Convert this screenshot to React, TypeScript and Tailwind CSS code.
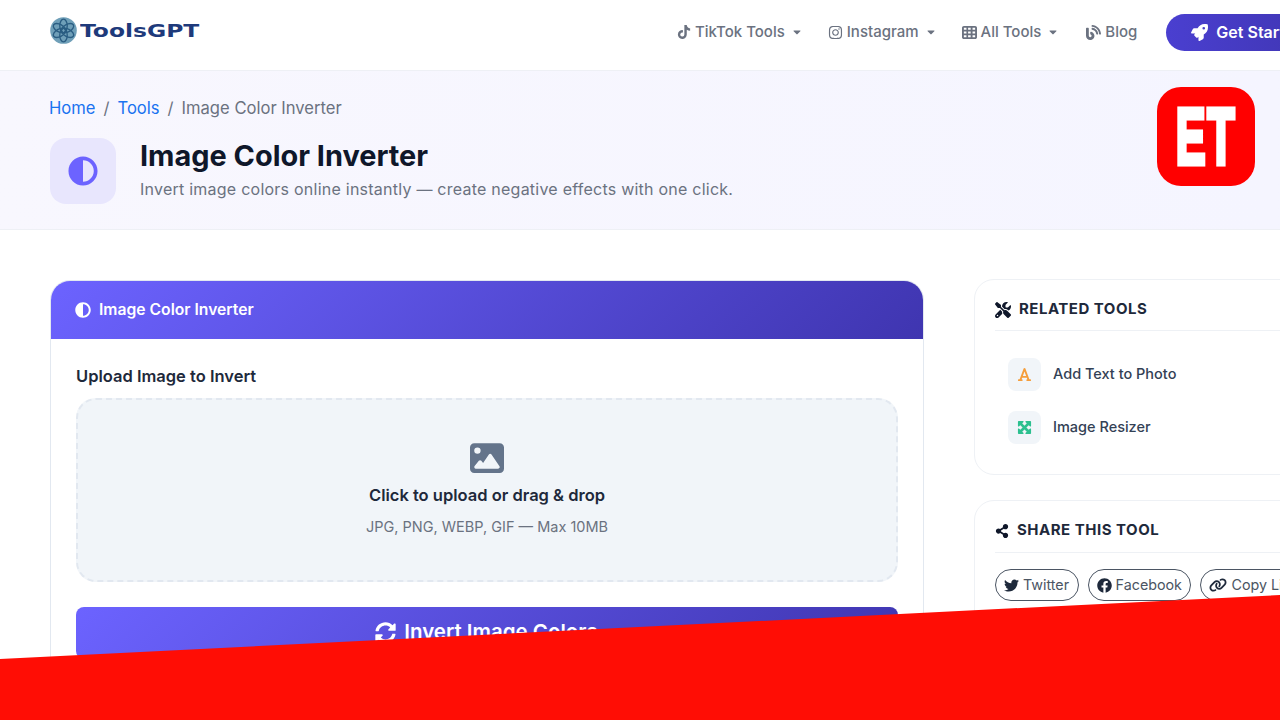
import { FaAdjust, FaBlog, FaCaretDown, FaFacebook, FaInstagram, FaRocket, FaShareAlt, FaSyncAlt, FaTiktok, FaTwitter } from 'react-icons/fa';
import { FaFont, FaImage, FaLink, FaMaximize, FaScrewdriverWrench, FaTableCells } from 'react-icons/fa6';

function LogoKnot() {
  return (
    <svg viewBox="0 0 26 26" className="h-[27px] w-[27px] shrink-0" aria-hidden>
      <circle cx="13" cy="13" r="12.8" fill="#6f9fb8" />
      <g fill="none" stroke="#2a5d82" strokeWidth="1.3">
        <ellipse cx="13" cy="8.5" rx="3.6" ry="6.5" />
        <ellipse cx="13" cy="8.5" rx="3.6" ry="6.5" transform="rotate(60 13 13)" />
        <ellipse cx="13" cy="8.5" rx="3.6" ry="6.5" transform="rotate(120 13 13)" />
        <ellipse cx="13" cy="8.5" rx="3.6" ry="6.5" transform="rotate(180 13 13)" />
        <ellipse cx="13" cy="8.5" rx="3.6" ry="6.5" transform="rotate(240 13 13)" />
        <ellipse cx="13" cy="8.5" rx="3.6" ry="6.5" transform="rotate(300 13 13)" />
      </g>
    </svg>
  );
}

function NavItem({ icon, label, caret }: { icon: React.ReactNode; label: string; caret?: boolean }) {
  return (
    <a className="flex items-center gap-1 text-[15px] font-medium text-[#6b7280]">
      {icon}
      <span>{label}</span>
      {caret && <FaCaretDown className="ml-[2px] h-[12px] w-[12px]" />}
    </a>
  );
}

function Navbar() {
  return (
    <nav className="flex h-[71px] items-center border-b border-[#eef0f5] bg-white pb-[6px] pl-[50px]">
      <a className="-mt-[4px] flex w-[627px] shrink-0 items-center">
        <LogoKnot />
        <span className="ml-[3px] origin-left scale-x-[1.3] text-[18px] font-bold text-[#1e3a7b] [font-family:'DejaVu_Sans',sans-serif]">
          ToolsGPT
        </span>
      </a>
      <div className="flex shrink-0 items-center">
        <div className="mr-[25px]">
          <NavItem icon={<FaTiktok className="h-[14px] w-[14px]" />} label="TikTok Tools" caret />
        </div>
        <div className="mr-[25px]">
          <NavItem icon={<FaInstagram className="h-[15px] w-[15px]" />} label="Instagram" caret />
        </div>
        <div className="mr-[27px]">
          <NavItem icon={<FaTableCells className="h-[15px] w-[15px]" />} label="All Tools" caret />
        </div>
        <NavItem icon={<FaBlog className="h-[15px] w-[15px]" />} label="Blog" />
        <button
          type="button"
          className="ml-[29px] flex h-[37px] w-[170px] shrink-0 items-center gap-2 rounded-full bg-gradient-to-r from-[#4a3fd0] to-[#3f35b0] pl-[25px] text-[16px] font-semibold text-white"
        >
          <FaRocket className="h-[17px] w-[17px]" />
          Get Started
        </button>
      </div>
    </nav>
  );
}

function Hero() {
  return (
    <header className="h-[159px] border-b border-[#eef0f5] bg-gradient-to-r from-[#f8f7fe] to-[#f5f5ff] px-[50px] pt-[25px]">
      <div className="-ml-px flex items-center gap-[8px] text-[16.6px] leading-6 text-[#6b7280]">
        <a className="text-[#1a73f0]">Home</a>
        <span>/</span>
        <a className="text-[#1a73f0]">Tools</a>
        <span>/</span>
        <span>Image Color Inverter</span>
      </div>
      <div className="mt-[18px] flex items-start gap-6">
        <div className="flex h-[66px] w-[66px] items-center justify-center rounded-2xl bg-[#e8e6fd] pr-px">
          <FaAdjust className="h-[30px] w-[30px] text-[#6c63ff]" />
        </div>
        <div>
          <h1 className="text-[28.9px] leading-9 font-bold text-[#0f172a]">Image Color Inverter</h1>
          <p className="mt-[3px] text-[16px] leading-6 tracking-[0.24px] text-[#6b7280]">
            Invert image colors online instantly — create negative effects with one click.
          </p>
        </div>
      </div>
    </header>
  );
}

function ToolCard() {
  return (
    <section className="h-[420px] overflow-hidden rounded-[20px] border border-[#e2e8f0] bg-white">
      <div className="flex h-[58px] items-center gap-2 bg-[linear-gradient(135deg,#6c63ff,#3f35b0)] px-6 pb-px text-[15.7px] font-semibold text-white">
        <FaAdjust className="h-4 w-4" />
        Image Color Inverter
      </div>
      <div className="px-[25px] pt-[25px]">
        <label className="block text-[16.5px] leading-6 font-semibold text-[#1e293b]">Upload Image to Invert</label>
        <div className="mt-[10px] flex h-[184px] flex-col items-center rounded-[20px] border-2 border-dashed border-[#e2e8f0] bg-[#f1f5f9] pt-[41px]">
          <FaImage className="h-[34px] w-[34px] text-[#64748b]" />
          <p className="mt-[8px] text-[16.5px] leading-6 font-semibold text-[#1e293b]">Click to upload or drag &amp; drop</p>
          <p className="mt-[10px] text-[14.5px] leading-5 text-[#6b7280]">JPG, PNG, WEBP, GIF — Max 10MB</p>
        </div>
        <button
          type="button"
          className="mt-[25px] flex h-[52px] w-full items-center justify-center gap-2 rounded-lg bg-[linear-gradient(135deg,#6c63ff,#3f35b0)] pr-px pb-[2px] text-[20.5px] font-semibold text-white"
        >
          <FaSyncAlt className="h-[21px] w-[21px]" />
          Invert Image Colors
        </button>
      </div>
    </section>
  );
}

function RelatedRow({ icon, label }: { icon: React.ReactNode; label: string }) {
  return (
    <div className="flex items-center gap-[12px]">
      <div className="flex h-[33px] w-[33px] items-center justify-center rounded-lg bg-[#f1f5f9]">{icon}</div>
      <span className="mb-[2px] text-[14.5px] font-medium text-[#334155]">{label}</span>
    </div>
  );
}

function Pill({ icon, label }: { icon: React.ReactNode; label: string }) {
  return (
    <a className="flex h-[32px] shrink-0 items-center gap-1 rounded-full border border-[#4b5563] pr-[8.5px] pl-2 text-[14.3px] text-[#4b5563]">
      {icon}
      {label}
    </a>
  );
}

function Sidebar() {
  return (
    <aside className="-mt-px flex flex-col gap-[25px]">
      <section className="h-[196px] rounded-[20px] border border-[#eef1f5] bg-white px-[20px]">
        <div className="flex h-[51px] items-end gap-2 border-b border-[#eef1f5] pb-[10px] text-[15px] font-bold tracking-[0.5px] text-[#1e293b]">
          <FaScrewdriverWrench className="mb-[2px] h-4 w-4 text-[#0f172a]" />
          RELATED TOOLS
        </div>
        <div className="flex flex-col gap-5 pt-[27px] pl-[13px]">
          <RelatedRow icon={<FaFont className="h-[15px] w-[15px] text-[#f59e3c]" />} label="Add Text to Photo" />
          <RelatedRow icon={<FaMaximize className="h-[15px] w-[15px] text-[#2cc08f]" />} label="Image Resizer" />
        </div>
      </section>
      <section className="h-[200px] rounded-[20px] border border-[#eef1f5] bg-white px-[20px]">
        <div className="flex h-[52px] items-end gap-2 border-b border-[#eef1f5] pb-[11px] text-[15px] font-bold tracking-[0.5px] text-[#1e293b]">
          <FaShareAlt className="mb-[3px] h-[14px] w-[14px] text-[#0f172a]" />
          SHARE THIS TOOL
        </div>
        <div className="flex gap-[9px] pt-[16px]">
          <Pill icon={<FaTwitter className="h-[15px] w-[15px] text-[#1e293b]" />} label="Twitter" />
          <Pill icon={<FaFacebook className="h-[15px] w-[15px] text-[#1e293b]" />} label="Facebook" />
          <Pill icon={<FaLink className="h-[18px] w-[18px] text-[#1e293b]" />} label="Copy Link" />
        </div>
      </section>
    </aside>
  );
}

export default function App() {
  return (
    <div className="relative h-[720px] w-[1280px] overflow-hidden bg-white [font-family:Inter,sans-serif]">
      <Navbar />
      <Hero />
      <main className="grid w-[1380px] grid-cols-[874px_1fr] gap-[50px] pt-[50px] pl-[50px]">
        <ToolCard />
        <Sidebar />
      </main>

      {/* channel badge burned over the page */}
      <div className="absolute top-[87px] left-[1157px] flex h-[99px] w-[98px] items-center justify-center overflow-hidden rounded-[24px] bg-[#ff0000]">
        <span className="scale-x-[0.56] text-[80px] leading-none font-bold tracking-[3px] text-white [-webkit-text-stroke:5px_white] [font-family:'Liberation_Sans',sans-serif]">
          ET
        </span>
      </div>

      {/* red slanted band along the bottom */}
      <div className="absolute right-0 bottom-0 left-0 h-[125px] bg-[#ff0d05] [clip-path:polygon(0_64px,100%_0,100%_100%,0_100%)]" />
    </div>
  );
}
